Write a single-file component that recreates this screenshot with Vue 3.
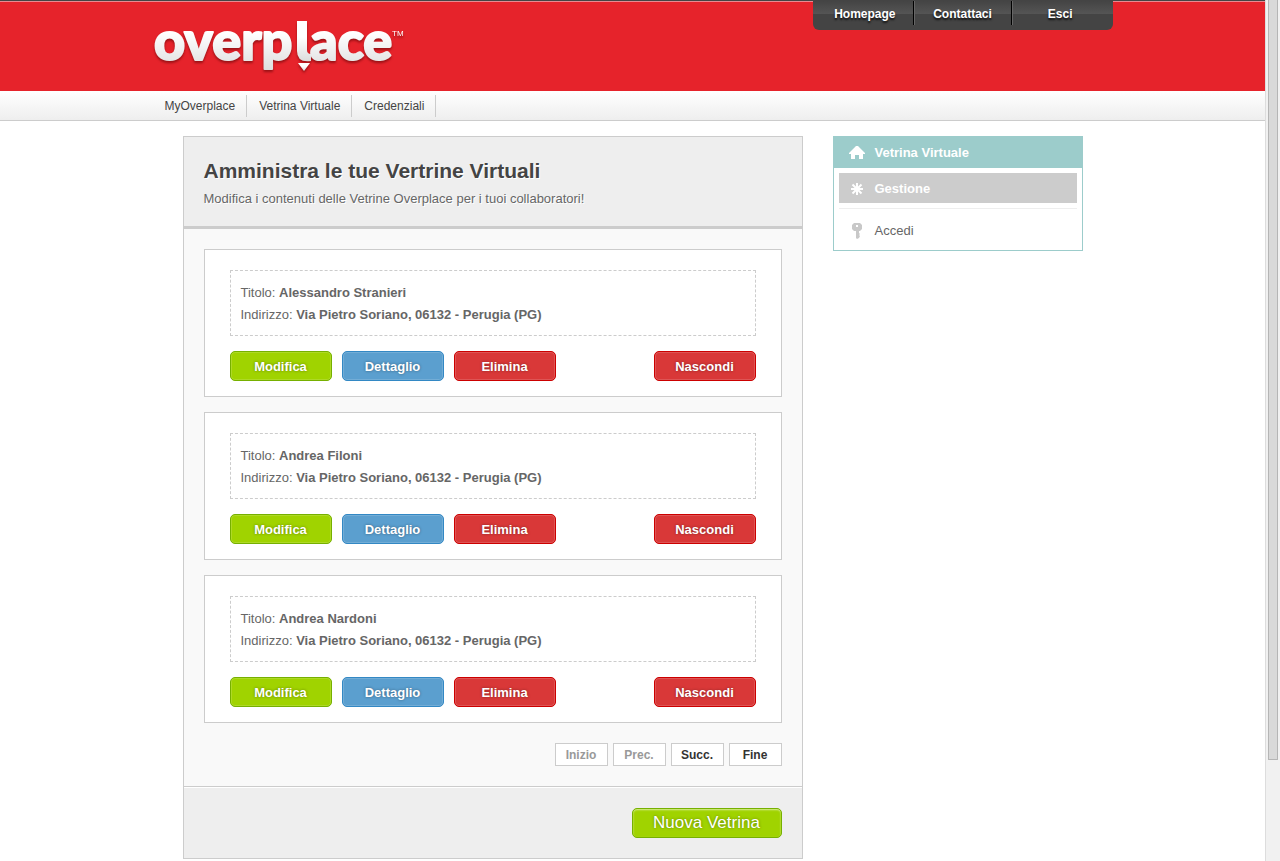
<script setup>
const topLinks = ['Homepage', 'Contattaci', 'Esci']
const navLinks = ['MyOverplace', 'Vetrina Virtuale', 'Credenziali']
const address = 'Via Pietro Soriano, 06132 - Perugia (PG)'
const items = [
  { title: 'Alessandro Stranieri', address },
  { title: 'Andrea Filoni', address },
  { title: 'Andrea Nardoni', address },
]
const pages = [
  { label: 'Inizio', disabled: true },
  { label: 'Prec.', disabled: true },
  { label: 'Succ.', disabled: false },
  { label: 'Fine', disabled: false },
]
</script>

<template>
  <div class="window">
    <div class="page">
      <header class="banner">
        <div class="container banner-row">
          <a href="#" class="logo" aria-label="overplace">
            <svg class="logo-mark" width="254" height="84" viewBox="0 0 254 84">
              <defs>
                <linearGradient id="silver" x1="0" y1="0" x2="0" y2="1">
                  <stop offset="0.4" stop-color="#ffffff" />
                  <stop offset="1" stop-color="#dcdcdc" />
                </linearGradient>
              </defs>
              <g fill="url(#silver)">
                <text class="word" x="1" y="59">overp</text>
                <path d="M144 20h10v29q0 4 4 4v7q-14 2-14-10z" />
                <text class="word" x="157" y="59">ace</text>
                <path d="M145 62h12l-6 8z" />
              </g>
              <text class="tm" x="239" y="35">TM</text>
            </svg>
          </a>
          <nav class="top-menu" aria-label="Menu utente">
            <a v-for="l in topLinks" :key="l" href="#">{{ l }}</a>
          </nav>
        </div>
      </header>

      <nav class="nav" aria-label="Menu principale">
        <div class="container nav-row">
          <a v-for="l in navLinks" :key="l" href="#">{{ l }}</a>
        </div>
      </nav>

      <div class="container content">
        <main class="panel">
          <div class="panel-head">
            <h1>Amministra le tue Vertrine Virtuali</h1>
            <p>Modifica i contenuti delle Vetrine Overplace per i tuoi collaboratori!</p>
          </div>
          <div class="panel-body">
            <article v-for="i in items" :key="i.title" class="card">
              <div class="info">
                <div>Titolo: <strong>{{ i.title }}</strong></div>
                <div>Indirizzo: <strong>{{ i.address }}</strong></div>
              </div>
              <div class="actions">
                <button type="button" class="btn green">Modifica</button>
                <button type="button" class="btn blue">Dettaglio</button>
                <button type="button" class="btn red">Elimina</button>
                <button type="button" class="btn red last">Nascondi</button>
              </div>
            </article>
            <div class="pager">
              <button v-for="p in pages" :key="p.label" type="button" :disabled="p.disabled">{{ p.label }}</button>
            </div>
          </div>
          <div class="panel-foot">
            <button type="button" class="btn green large">Nuova Vetrina</button>
          </div>
        </main>

        <aside class="side">
          <h2>
            <svg width="16" height="14" viewBox="0 0 16 14" fill="#fff"><path d="M7 0h2l7 7v1h-2v5H10V9H6v4H2V8H0V7z" /></svg>
            Vetrina Virtuale
          </h2>
          <ul>
            <li>
              <a href="#" class="active">
                <svg width="16" height="14" viewBox="0 0 16 14" fill="none" stroke="#fff" stroke-width="2"><path d="M8 1v12M2 7h12" /><path d="M3.500 2.500l9 9M12.500 2.500l-9 9" /></svg>
                Gestione
              </a>
            </li>
            <li>
              <a href="#">
                <svg width="16" height="16" viewBox="0 0 16 16" fill="#c8c8c8" fill-rule="evenodd"><path d="M5 0h6l2 2v4l-2 2h-1v2l1 1-1 1 1 1-1 2-2 1-1-1V8H5L3 6V2zM7 2v2h2V2z" /></svg>
                Accedi
              </a>
            </li>
          </ul>
        </aside>
      </div>
    </div>
    <div class="scrollbar" aria-hidden="true"><div class="thumb"></div></div>
  </div>
</template>

<style>
body {
  background: #fff;
}
</style>

<style scoped>
* {
  box-sizing: border-box;
}
.window {
  display: flex;
  min-height: 100vh;
  font: 13px/22px "Liberation Sans", Arial, sans-serif;
  color: #666;
}
.page {
  flex: 1;
}
a {
  color: inherit;
  text-decoration: none;
}
.container {
  max-width: 960px;
  margin: 0 auto;
}
.banner {
  border-top: 1px solid #444;
  box-shadow: inset 0 1px #e88a91;
  background: #e6232b;
}
.banner-row {
  display: flex;
  justify-content: space-between;
  align-items: flex-start;
  min-height: 90px;
}
.logo-mark {
  display: block;
  filter: drop-shadow(0 2px 1px rgba(80, 0, 0, 0.5));
}
.word {
  font: 900 54px Lato, sans-serif;
  stroke: url(#silver);
  stroke-width: 2px;
  stroke-linejoin: round;
}
.tm {
  font: 8px "Liberation Sans", Arial, sans-serif;
  fill: #fff;
}
.top-menu {
  display: flex;
  width: 300px;
  height: 29px;
  padding: 0 4px;
  border-radius: 0 0 6px 6px;
  background: linear-gradient(#444, #555 13px, #444 13px);
}
.top-menu a {
  flex: 1;
  height: 24px;
  line-height: 26px;
  font-size: 12px;
  font-weight: bold;
  text-align: center;
  color: #fff;
  text-shadow: 0 2px 2px #111;
}
.top-menu a + a {
  border-left: 1px solid #000;
  box-shadow: inset 1px 0 #666;
}
.nav {
  border-bottom: 1px solid #ccc;
  background: linear-gradient(#fff, #eee);
}
.nav-row {
  display: flex;
  align-items: center;
  height: 29px;
}
.nav-row a {
  padding: 0 11px 0 12px;
  border-right: 1px solid #ccc;
  font-size: 12px;
  color: #444;
}
.content {
  display: flex;
  align-items: flex-start;
  gap: 30px;
  padding: 15px 30px 2px;
}
.panel {
  flex: 1;
  border: 1px solid #ccc;
  background: #f9f9f9;
}
.panel-head {
  padding: 20px 20px 16px;
  border-bottom: 3px solid #ccc;
  background: #eee;
  text-shadow: 1px 1px #fff;
}
h1 {
  margin: 0;
  font-size: 21px;
  line-height: 28px;
  color: #444;
}
.panel-head p {
  margin: 0;
  padding: 3px 0 0;
}
.panel-body {
  padding: 20px;
}
.card {
  margin-bottom: 15px;
  padding: 20px 25px 15px;
  border: 1px solid #ccc;
  background: #fff;
}
.info {
  padding: 11px 10px 9px;
  border: 1px dashed #ccc;
}
.actions {
  display: flex;
  gap: 10px;
  margin-top: 15px;
}
.btn {
  width: 102px;
  height: 30px;
  padding: 0;
  border: 1px solid;
  border-radius: 5px;
  font: bold 13px "Liberation Sans", Arial, sans-serif;
  color: #fff;
  text-shadow: 0 0 3px rgba(0, 0, 0, 0.4);
  box-shadow: inset 0 0 0 1px rgba(255, 255, 255, 0.15);
}
.green {
  border-color: #76b000;
  background: #a0d300;
}
.blue {
  border-color: #3388c4;
  background: #5b9fcf;
}
.red {
  border-color: #cc0000;
  background: #d93838;
}
.last {
  margin-left: auto;
}
.pager {
  display: flex;
  justify-content: flex-end;
  gap: 5px;
  margin-top: 20px;
}
.pager button {
  width: 53px;
  height: 23px;
  padding: 0;
  border: 1px solid #ccc;
  background: #fff;
  font: bold 12px "Liberation Sans", Arial, sans-serif;
  color: #333;
}
.pager button:disabled {
  color: #999;
}
.panel-foot {
  display: flex;
  justify-content: flex-end;
  padding: 21px 20px 20px;
  border-top: 1px solid #ccc;
  box-shadow: inset 0 1px #fff;
  background: #eee;
}
.large {
  width: 150px;
  font-size: 17px;
  font-weight: normal;
  box-shadow: inset 0 1px 2px rgba(255, 255, 255, 0.6);
}
.side {
  width: 250px;
  border: 1px solid #9ccccb;
}
.side h2,
.side a {
  display: flex;
  align-items: center;
  gap: 10px;
  margin: 0;
}
.side h2 {
  height: 31px;
  padding: 0 15px;
  background: #9ccccb;
  font-size: 13px;
  color: #fff;
}
.side ul {
  margin: 0;
  padding: 5px;
  list-style: none;
}
.side a {
  height: 30px;
  padding: 1px 10px 0;
}
.side .active {
  background: #ccc;
  color: #fff;
  font-weight: bold;
}
.side li + li {
  margin-top: 5px;
  padding-top: 6px;
  border-top: 1px solid #eee;
}
.scrollbar {
  width: 15px;
  padding: 0 2px;
  border-left: 1px solid #ddd;
  background: #f1f1f1;
}
.thumb {
  height: 760px;
  border: 1px solid #b5b5b5;
  border-top: 0;
  border-radius: 0 0 1px 1px;
  background: #d9d9d9;
}
</style>
